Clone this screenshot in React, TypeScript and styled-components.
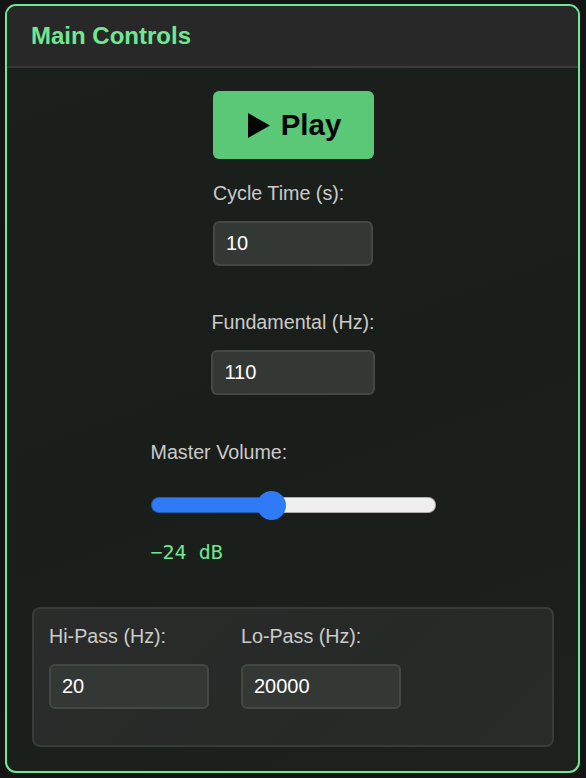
import React, { useState } from "react";
import styled, { createGlobalStyle } from "styled-components";

const GlobalStyle = createGlobalStyle`
  html, body {
    margin: 0;
    padding: 0;
    background: #141414;
    font-family: "Liberation Sans", Arial, Helvetica, sans-serif;
  }
  * { box-sizing: border-box; }
`;

const Panel = styled.section`
  margin: 4px 6px 5px 5px;
  border: 2px solid #6fe894;
  border-radius: 11px;
  overflow: hidden;
  background: linear-gradient(160deg, #1b201d 0%, #1a1e1b 55%, #1c211e 100%);
`;

const Header = styled.header`
  height: 62px;
  padding: 16px 24px 0;
  background: #282828;
  border-bottom: 2px solid #3a3a3a;
`;

const Title = styled.h2`
  margin: 0;
  font-size: 24px;
  line-height: 28px;
  font-weight: 700;
  color: #6fe891;
`;

const Body = styled.div`
  display: flex;
  flex-direction: column;
  align-items: center;
  padding: 23px 24px 24px 25px;
`;

const PlayButton = styled.button`
  width: 161px;
  height: 68px;
  margin: 0 0 23px;
  border: none;
  border-radius: 6px;
  background: #5ac876;
  color: #050505;
  display: flex;
  align-items: center;
  justify-content: center;
  gap: 11px;
  padding: 0 0 0 3px;
  font-family: inherit;
  font-size: 29.5px;
  font-weight: 700;
  cursor: pointer;
`;

const Field = styled.div<{ $gap?: number }>`
  display: inline-flex;
  flex-direction: column;
  align-items: stretch;
  margin-bottom: ${(p) => (p.$gap ?? 0)}px;
`;

const Label = styled.label`
  display: block;
  font-size: 19.7px;
  line-height: 23px;
  color: #cbcbcb;
  margin-bottom: 16px;
  white-space: nowrap;
`;

const NumberInput = styled.input`
  min-width: 160px;
  width: 100%;
  height: 45px;
  padding: 0 11px;
  border: 2px solid #444844;
  border-radius: 6px;
  background: #343834;
  color: #ffffff;
  font-family: inherit;
  font-size: 20px;
  outline: none;
`;

const VolumeBlock = styled.div`
  width: 285px;
  display: flex;
  flex-direction: column;
  margin-bottom: 43px;
`;

const VolumeLabel = styled(Label)`
  margin-bottom: 26px;
`;

const Range = styled.input<{ $pct: number }>`
  -webkit-appearance: none;
  appearance: none;
  display: block;
  width: 285px;
  height: 30px;
  margin: 0 0 20px;
  padding: 0;
  background: transparent;
  outline: none;

  &::-webkit-slider-runnable-track {
    box-sizing: border-box;
    height: 16px;
    border-radius: 8px;
    border: 1px solid rgba(0, 0, 0, 0.27);
    background-origin: border-box;
    background-clip: border-box;
    background-image: linear-gradient(
      to right,
      #2f7bf6 0,
      #2f7bf6 calc(14.5px + ${(p) => p.$pct} * (100% - 29px)),
      #efefef calc(14.5px + ${(p) => p.$pct} * (100% - 29px)),
      #efefef 100%
    );
  }

  &::-webkit-slider-thumb {
    -webkit-appearance: none;
    appearance: none;
    width: 29px;
    height: 29px;
    margin-top: -7.5px;
    border: none;
    border-radius: 50%;
    background: #2f7bf6;
  }
`;

const DbReadout = styled.div`
  font-family: "DejaVu Sans Mono", "Liberation Mono", monospace;
  font-size: 20px;
  line-height: 24px;
  color: #6fe891;
`;

const FilterBox = styled.div`
  align-self: stretch;
  display: flex;
  gap: 32px;
  padding: 16px 15px 36px;
  border: 2px solid #383c39;
  border-radius: 8px;
  background: linear-gradient(135deg, #292c2a 0%, #262a27 60%, #282c29 100%);
`;

const PlayIcon = () => (
  <svg width="22" height="25" viewBox="0 0 22 25" aria-hidden="true">
    <polygon points="0,0 22,12.5 0,25" fill="currentColor" />
  </svg>
);

export default function App() {
  const [cycle, setCycle] = useState("10");
  const [fund, setFund] = useState("110");
  const [vol, setVol] = useState(-24);
  const [hi, setHi] = useState("20");
  const [lo, setLo] = useState("20000");
  const min = -41;
  const max = 0;
  const pct = (vol - min) / (max - min);

  return (
    <>
      <GlobalStyle />
      <Panel>
        <Header>
          <Title>Main Controls</Title>
        </Header>
        <Body>
          <PlayButton>
            <PlayIcon />
            <span>Play</span>
          </PlayButton>

          <Field $gap={45}>
            <Label htmlFor="cycle">Cycle Time (s):</Label>
            <NumberInput
              id="cycle"
              type="text"
              size={1}
              value={cycle}
              onChange={(e) => setCycle(e.target.value)}
            />
          </Field>

          <Field $gap={46}>
            <Label htmlFor="fund">Fundamental (Hz):</Label>
            <NumberInput
              id="fund"
              type="text"
              size={1}
              value={fund}
              onChange={(e) => setFund(e.target.value)}
            />
          </Field>

          <VolumeBlock>
            <VolumeLabel htmlFor="vol">Master Volume:</VolumeLabel>
            <Range
              id="vol"
              type="range"
              min={min}
              max={max}
              step={1}
              value={vol}
              $pct={pct}
              onChange={(e) => setVol(Number(e.target.value))}
            />
            <DbReadout>{`\u2212${Math.abs(vol)} dB`}</DbReadout>
          </VolumeBlock>

          <FilterBox>
            <Field>
              <Label htmlFor="hi">Hi-Pass (Hz):</Label>
              <NumberInput
                id="hi"
                type="text"
                size={1}
                value={hi}
                onChange={(e) => setHi(e.target.value)}
              />
            </Field>
            <Field>
              <Label htmlFor="lo">Lo-Pass (Hz):</Label>
              <NumberInput
                id="lo"
                type="text"
                size={1}
                value={lo}
                onChange={(e) => setLo(e.target.value)}
              />
            </Field>
          </FilterBox>
        </Body>
      </Panel>
    </>
  );
}
